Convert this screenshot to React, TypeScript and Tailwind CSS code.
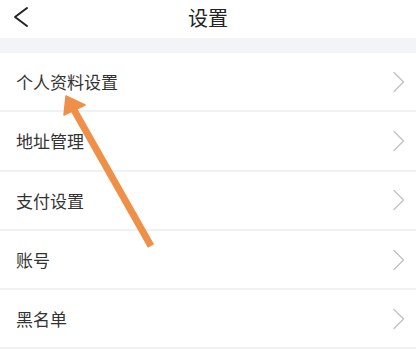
import React from "react";

const items = ["个人资料设置", "地址管理", "支付设置", "账号", "黑名单"];

function Chevron() {
  return (
    <svg width="14" height="22" viewBox="0 0 14 22" className="shrink-0">
      <polyline points="3,1.5 12.5,11 3,20.5" fill="none" stroke="#c2c2c2" strokeWidth="1.4" strokeLinecap="round" strokeLinejoin="round" />
    </svg>
  );
}

export default function App() {
  return (
    <div
      className="relative w-[416px] h-[361px] bg-white overflow-hidden text-[#333]"
      style={{ fontFamily: '"Noto Sans CJK SC", "Noto Sans", sans-serif' }}
    >
      <div className="relative h-[38px] flex items-center justify-center">
        <svg width="16" height="22" viewBox="0 0 16 22" className="absolute left-[13px] top-[6px]">
          <polyline points="14,2 2,11 14,20" fill="none" stroke="#222" strokeWidth="2" strokeLinecap="round" strokeLinejoin="round" />
        </svg>
        <span className="text-[20px] leading-none text-[#222] -mt-[3px]">设置</span>
      </div>
      <div className="h-[15px] bg-[#f3f4f6]" />
      <div className="flex flex-col">
        {items.map((t) => (
          <div key={t} className="h-[59.3px] flex items-center justify-between pl-4 pr-[11px] border-b-2 border-[#f1f1f1]">
            <span className="text-[17px] leading-none">{t}</span>
            <Chevron />
          </div>
        ))}
      </div>
      <svg className="absolute left-0 top-0 pointer-events-none" width="416" height="361" viewBox="0 0 416 361">
        <line x1="151" y1="246" x2="74" y2="110" stroke="#ef9048" strokeWidth="7" />
        <polygon points="66,96 64,115 85,105" fill="#ef9048" stroke="#ef9048" strokeWidth="1.5" strokeLinejoin="round" />
      </svg>
    </div>
  );
}
